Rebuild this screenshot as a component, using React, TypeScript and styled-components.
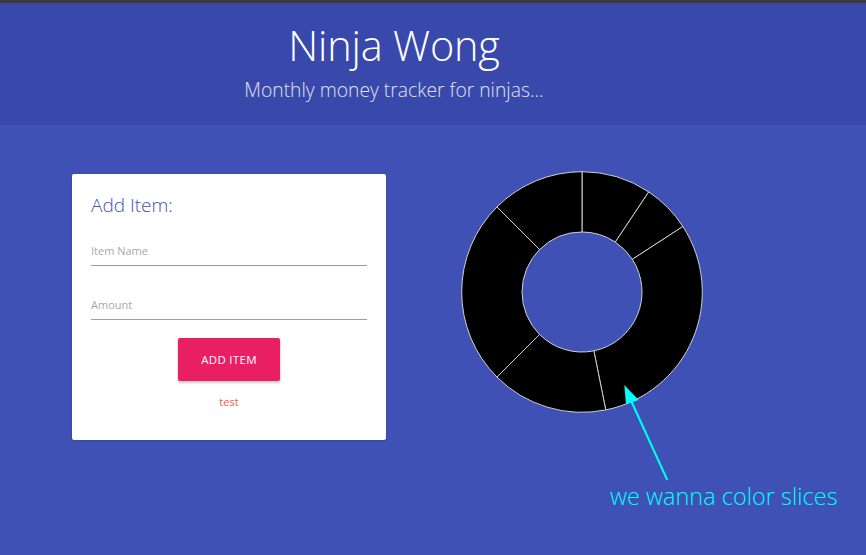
import React from "react";
import styled, { createGlobalStyle } from "styled-components";

const Global = createGlobalStyle`
  html, body { margin: 0; padding: 0; }
  body {
    background: #3f51b5;
    font-family: "Open Sans", "Noto Sans", sans-serif;
    overflow: hidden;
  }
`;

const Page = styled.div`
  position: relative;
  width: 866px;
  height: 555px;
  background: #3f51b5;
`;

const TopStrip = styled.div`
  height: 3px;
  background: #3a3a3a;
`;

const Header = styled.header`
  height: 122px;
  background: #3949ab;
  display: flex;
  flex-direction: column;
  align-items: center;
  padding-right: 78px;
  box-sizing: border-box;
`;

const Title = styled.h1`
  margin: 16px 0 0;
  font-size: 41.5px;
  font-weight: 300;
  line-height: 52px;
  color: #ffffff;
  letter-spacing: -0.2px;
`;

const Subtitle = styled.p`
  margin: 7px 0 0;
  font-size: 19.3px;
  font-weight: 300;
  line-height: 24px;
  color: #e0e0ee;
`;

const Main = styled.main`
  display: flex;
  align-items: flex-start;
  padding: 49px 0 0 72px;
`;

const Card = styled.section`
  width: 314px;
  height: 266px;
  box-sizing: border-box;
  background: #ffffff;
  border-radius: 2px;
  box-shadow: 0 1px 3px rgba(0, 0, 0, 0.15);
  padding: 18px 19px 0 19px;
  display: flex;
  flex-direction: column;
`;

const CardTitle = styled.h2`
  margin: 0;
  font-size: 19px;
  font-weight: 300;
  line-height: 26px;
  color: #3f51b5;
`;

const Field = styled.div<{ $top: number }>`
  margin-top: ${(p) => p.$top}px;
  display: flex;
  flex-direction: column;
`;

const Label = styled.span`
  font-size: 11px;
  line-height: 14px;
  color: #a8a8a8;
  padding-bottom: 7px;
  border-bottom: 1px solid #9e9e9e;
`;

const ButtonRow = styled.div`
  display: flex;
  justify-content: center;
  margin-top: 18px;
`;

const Button = styled.button`
  width: 102px;
  height: 43px;
  border: none;
  border-radius: 2px;
  background: #e91e63;
  color: #ffffff;
  font-family: "Open Sans", "Noto Sans", sans-serif;
  font-size: 11.5px;
  letter-spacing: 0.3px;
  box-shadow: 0 2px 2px rgba(0, 0, 0, 0.14), 0 1px 4px rgba(0, 0, 0, 0.12);
  padding: 0;
`;

const Note = styled.p`
  margin: 14px 0 0;
  text-align: center;
  font-size: 11px;
  line-height: 14px;
  color: #f65a50;
`;

const ChartWrap = styled.div`
  margin: -4px 0 0 74px;
  width: 244px;
  height: 244px;
`;

const Annotation = styled.div`
  position: absolute;
  left: 610px;
  top: 478px;
  font-size: 23.5px;
  font-weight: 300;
  line-height: 36px;
  color: #00ffff;
  white-space: nowrap;
`;

const ArrowSvg = styled.svg`
  position: absolute;
  left: 0;
  top: 0;
  pointer-events: none;
`;

const slices = [
  [0, 33.7],
  [33.7, 57],
  [57, 168.6],
  [168.6, 225],
  [225, 315],
  [315, 360],
];

function pt(cx: number, cy: number, r: number, deg: number) {
  const a = (deg * Math.PI) / 180;
  return [cx + r * Math.sin(a), cy - r * Math.cos(a)];
}

function arcPath(a0: number, a1: number) {
  const cx = 122,
    cy = 122,
    R = 120.3,
    r = 60;
  const [x0, y0] = pt(cx, cy, R, a0);
  const [x1, y1] = pt(cx, cy, R, a1);
  const [x2, y2] = pt(cx, cy, r, a1);
  const [x3, y3] = pt(cx, cy, r, a0);
  const large = a1 - a0 > 180 ? 1 : 0;
  return `M${x0},${y0} A${R},${R} 0 ${large} 1 ${x1},${y1} L${x2},${y2} A${r},${r} 0 ${large} 0 ${x3},${y3} Z`;
}

function Donut() {
  return (
    <svg width="244" height="244" viewBox="0 0 244 244">
      {slices.map(([a, b], i) => (
        <path key={i} d={arcPath(a, b)} fill="#000" stroke="#d0d0d0" strokeWidth="1" />
      ))}
    </svg>
  );
}

export default function App() {
  return (
    <Page>
      <Global />
      <TopStrip />
      <Header>
        <Title>Ninja Wong</Title>
        <Subtitle>Monthly money tracker for ninjas...</Subtitle>
      </Header>
      <Main>
        <Card>
          <CardTitle>Add Item:</CardTitle>
          <Field $top={26}>
            <Label>Item Name</Label>
          </Field>
          <Field $top={32}>
            <Label>Amount</Label>
          </Field>
          <ButtonRow>
            <Button>ADD ITEM</Button>
          </ButtonRow>
          <Note>test</Note>
        </Card>
        <ChartWrap>
          <Donut />
        </ChartWrap>
      </Main>
      <ArrowSvg width="866" height="555" viewBox="0 0 866 555">
        <line x1="667.3" y1="480" x2="628" y2="394" stroke="#00ffff" strokeWidth="2" />
        <polygon points="624.3,385 626,404.3 638.7,400" fill="#00ffff" />
      </ArrowSvg>
      <Annotation>we wanna color slices</Annotation>
    </Page>
  );
}
